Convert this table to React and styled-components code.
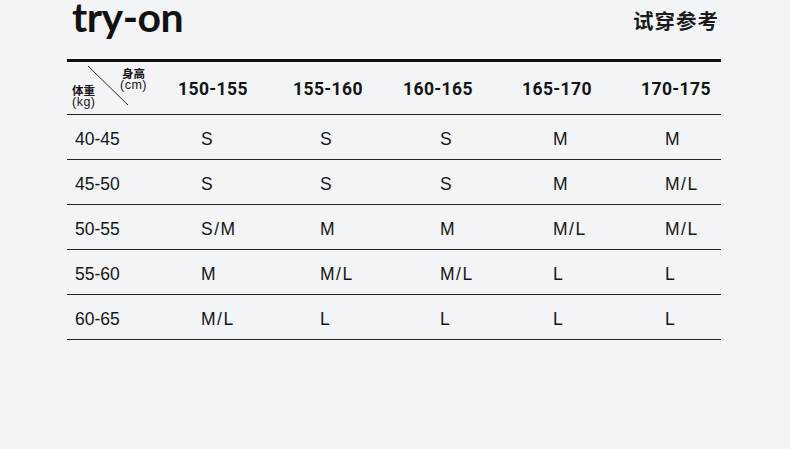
import styled, { createGlobalStyle } from "styled-components";

const Global = createGlobalStyle`
  html, body {
    margin: 0;
    padding: 0;
    background: #f3f4f6;
  }
  body {
    width: 790px;
    height: 449px;
    overflow: hidden;
    color: #161616;
  }
`;

const Page = styled.div`
  width: 654px;
  padding-left: 67px;
`;

const TitleBar = styled.div`
  height: 59px;
  display: flex;
  justify-content: space-between;
  align-items: flex-start;
`;

const Title = styled.h1`
  margin: -4px 0 0 5px;
  font-family: Lato, "Liberation Sans", sans-serif;
  font-weight: 700;
  font-size: 41px;
  line-height: 41px;
  letter-spacing: -0.5px;
  color: #111;
`;

const Subtitle = styled.div`
  margin: 9px 2px 0 0;
  font-family: "Noto Sans CJK SC", sans-serif;
  font-weight: 700;
  font-size: 20.5px;
  line-height: 22px;
  letter-spacing: 1px;
  color: #1c1c1c;
`;

const Table = styled.div`
  border-top: 3px solid #111;
`;

const HeadRow = styled.div`
  display: grid;
  grid-template-columns: 111px 115px 110px 119px 119px 1fr;
  height: 52px;
  border-bottom: 1px solid #222;
  align-items: center;
`;

const Corner = styled.div`
  position: relative;
  height: 52px;
`;

const Diagonal = styled.svg`
  position: absolute;
  left: 0;
  top: 0;
`;

const CornerLabel = styled.div`
  position: absolute;
  left: ${(p) => p.$x}px;
  top: ${(p) => p.$y}px;
  font-family: "Liberation Sans", "Noto Sans CJK SC", sans-serif;
  text-align: ${(p) => (p.$right ? "center" : "left")};
`;

const CjkSmall = styled.div`
  font-family: "Noto Sans CJK SC", sans-serif;
  font-weight: 700;
  font-size: 11.5px;
  line-height: 11px;
`;

const Unit = styled.div`
  font-size: 12.5px;
  line-height: 12px;
  letter-spacing: 0.5px;
`;

const HeadCell = styled.div`
  font-family: Roboto, "Liberation Sans", sans-serif;
  font-weight: 700;
  font-size: 17.5px;
  letter-spacing: 0.4px;
  padding-top: 1px;
  color: #141414;
`;

const Row = styled.div`
  display: grid;
  grid-template-columns: 134px 119px 120px 113px 112px 1fr;
  height: 44px;
  border-bottom: 1px solid #222;
  align-items: center;
`;

const Cell = styled.div`
  font-family: "Liberation Sans", sans-serif;
  font-size: 17.5px;
  letter-spacing: ${(p) => (p.$label ? "0" : "1.5px")};
  padding-left: ${(p) => (p.$label ? "8px" : "0")};
  padding-top: 4px;
  color: #161616;
`;

const heights = ["150-155", "155-160", "160-165", "165-170", "170-175"];

const rows = [
  ["40-45", "S", "S", "S", "M", "M"],
  ["45-50", "S", "S", "S", "M", "M/L"],
  ["50-55", "S/M", "M", "M", "M/L", "M/L"],
  ["55-60", "M", "M/L", "M/L", "L", "L"],
  ["60-65", "M/L", "L", "L", "L", "L"],
];

export default function App() {
  return (
    <Page>
      <Global />
      <TitleBar>
        <Title>try-on</Title>
        <Subtitle>试穿参考</Subtitle>
      </TitleBar>
      <Table>
        <HeadRow>
          <Corner>
            <Diagonal width="111" height="52">
              <line x1="21" y1="4" x2="61" y2="43" stroke="#222" strokeWidth="1" />
            </Diagonal>
            <CornerLabel $x={53} $y={6} $right>
              <CjkSmall>身高</CjkSmall>
              <Unit>(cm)</Unit>
            </CornerLabel>
            <CornerLabel $x={5} $y={23}>
              <CjkSmall>体重</CjkSmall>
              <Unit>(kg)</Unit>
            </CornerLabel>
          </Corner>
          {heights.map((h) => (
            <HeadCell key={h}>{h}</HeadCell>
          ))}
        </HeadRow>
        {rows.map((r) => (
          <Row key={r[0]}>
            {r.map((v, i) => (
              <Cell key={i} $label={i === 0}>
                {v}
              </Cell>
            ))}
          </Row>
        ))}
      </Table>
    </Page>
  );
}
